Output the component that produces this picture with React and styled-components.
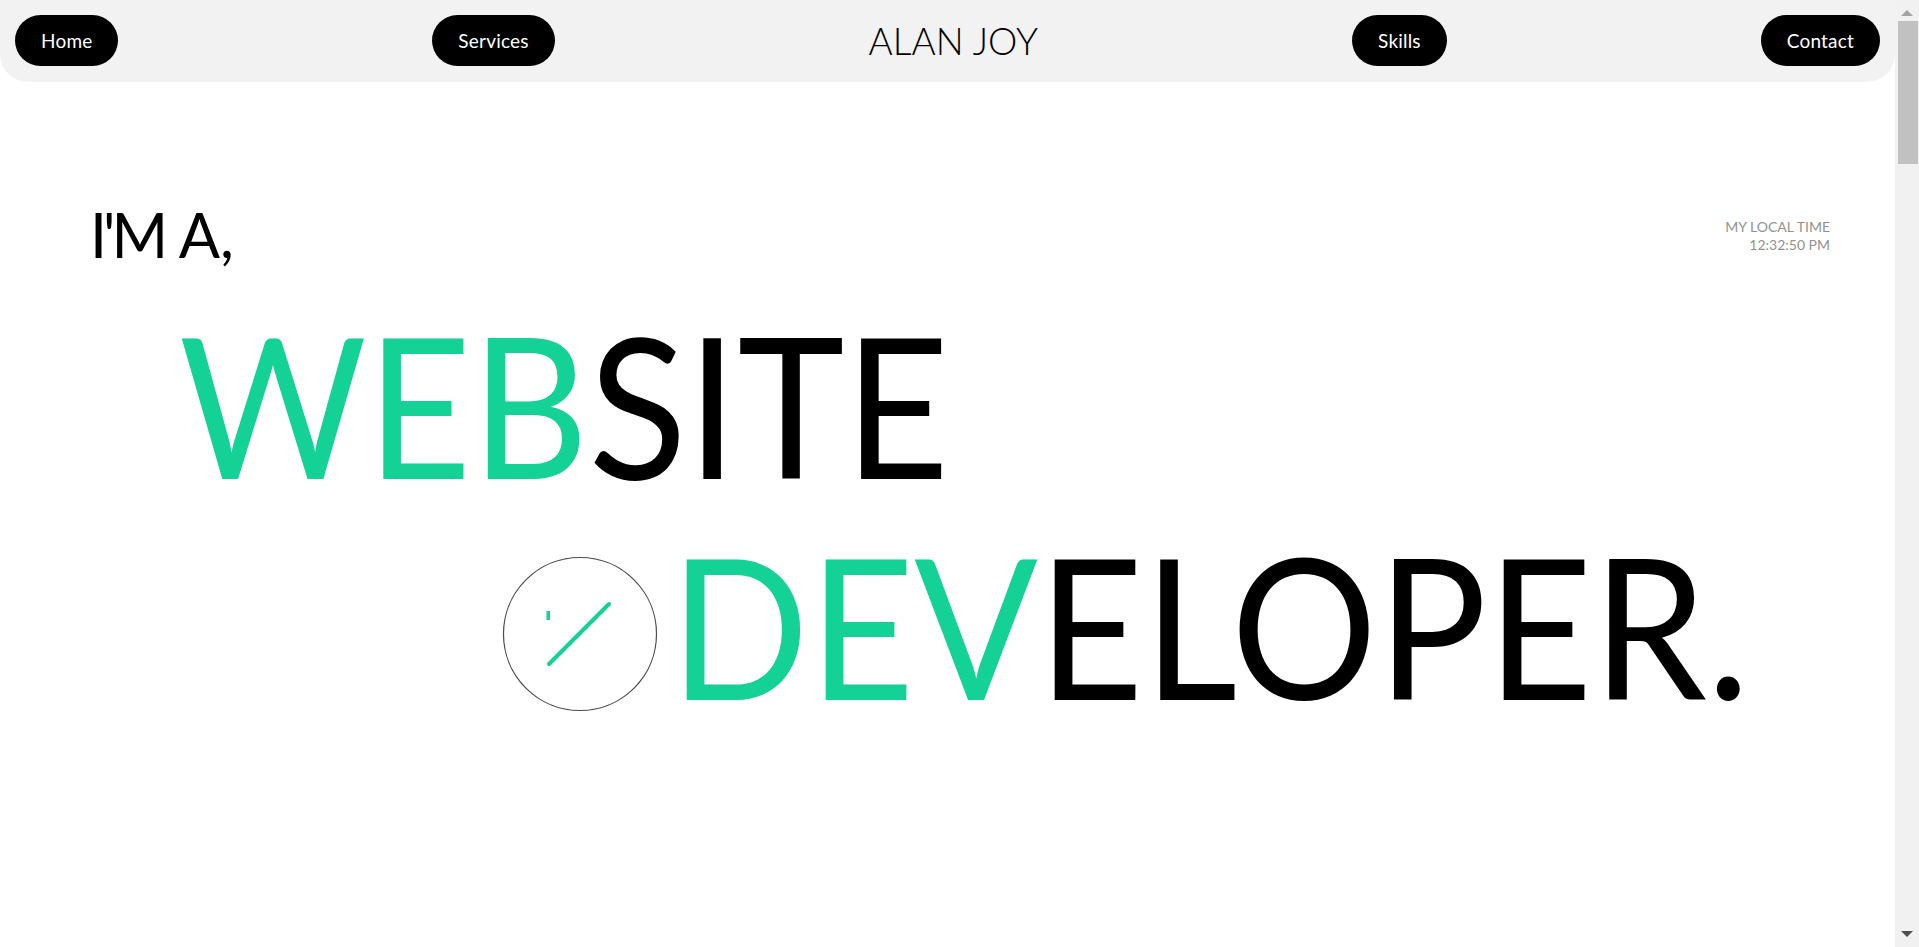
import React from 'react'
import styled, { createGlobalStyle } from 'styled-components';

const green = '#14d195';

const GlobalStyle = createGlobalStyle`
  * {
    box-sizing: border-box;
  }
  body {
    margin: 0;
    background: #fff;
    font-family: "Lato", "Liberation Sans", sans-serif;
    color: #000;
  }
`;

const Clock = () => {
  return (
    <ClockFace viewBox="0 0 156 156" width="156" height="156">
      <circle cx="78" cy="78" r="76.5" fill="none" stroke="#4a4a4a" strokeWidth="1.2" />
      <line x1="47" y1="108" x2="107" y2="48" stroke={green} strokeWidth="4" strokeLinecap="round" />
      <rect x="44.5" y="55" width="3.5" height="9" fill={green} />
    </ClockFace>
  )
}

const App = () => {
  const links = ['Home', 'Services', 'ALAN JOY', 'Skills', 'Contact'];
  return (
    <>
      <GlobalStyle />
      <Page>
        <Nav>
          {links.map((item, index) => {
            return index === 2
              ? <Brand key={index}>{item}</Brand>
              : <NavButton key={index} href={'#' + item.toLowerCase()}>{item}</NavButton>
          })}
        </Nav>
        <Hero id="home">
          <TopRow>
            <Intro>I'M A<Comma>,</Comma></Intro>
            <LocalTime>
              <span>MY LOCAL TIME</span>
              <span>12:32:50 PM</span>
            </LocalTime>
          </TopRow>
          <BigLine indent="89px" top="30px">
            <Word><Accent>WEB</Accent>SITE</Word>
          </BigLine>
          <BigLine indent="412px" top="4px">
            <Clock />
            <Word gap="12px" stretch="0.927"><Accent>DEV</Accent>ELOPER.</Word>
          </BigLine>
        </Hero>
        <Section id="services" />
        <Section id="skills" />
        <Section id="contact" />
      </Page>
      <ScrollTrack>
        <Arrow up />
        <Thumb />
        <Spacer />
        <Arrow />
      </ScrollTrack>
    </>
  )
}

const Page = styled.div`
  margin-right: 24px;
`;

const Nav = styled.nav`
  display: flex;
  justify-content: space-between;
  align-items: center;
  padding: 15px 15px 16px;
  background-color: #f2f2f2;
  border-radius: 0 0 28px 28px;
`;

const NavButton = styled.a`
  display: flex;
  align-items: center;
  height: 51px;
  padding: 0 26px;
  border-radius: 26px;
  background-color: #000;
  color: #fff;
  font-size: 19px;
  letter-spacing: 0.2px;
  text-decoration: none;
`;

const Brand = styled.div`
  font-size: 37px;
  font-weight: 300;
`;

const Hero = styled.section`
  padding: 122px 65px 0 90px;
  height: 1150px;
`;

const TopRow = styled.div`
  display: flex;
  justify-content: space-between;
  align-items: flex-start;
`;

const Intro = styled.h2`
  margin: 0;
  font-size: 61px;
  font-weight: 400;
  line-height: 1;
  letter-spacing: -4px;
  word-spacing: 5px;
`;

const Comma = styled.span`
  margin-left: 4px;
`;

const LocalTime = styled.div`
  display: flex;
  flex-direction: column;
  align-items: flex-end;
  margin-top: 14px;
  font-size: 14px;
  line-height: 18px;
  color: #929292;
`;

const BigLine = styled.h1`
  display: flex;
  align-items: center;
  margin: ${({ top }) => top} 0 0;
  padding-left: ${({ indent }) => indent};
  font-size: 197px;
  font-weight: 400;
  line-height: 1.1;
`;

const Word = styled.span`
  display: inline-block;
  margin-left: ${({ gap }) => gap || 0};
  transform: scaleX(${({ stretch }) => stretch || 0.92});
  transform-origin: left center;
  white-space: nowrap;
`;

const Accent = styled.span`
  color: ${green};
`;

const ClockFace = styled.svg`
  flex-shrink: 0;
  margin-top: 19px;
`;

const Section = styled.section`
  height: 1600px;
`;

const ScrollTrack = styled.aside`
  position: fixed;
  top: 0;
  right: 0;
  bottom: 0;
  width: 24px;
  display: flex;
  flex-direction: column;
  align-items: center;
  background-color: #f1f1f1;
`;

const Arrow = styled.div`
  flex-shrink: 0;
  width: 0;
  height: 0;
  margin: ${({ up }) => (up ? '10px 0 5px' : '5px 0 10px')};
  border-left: 6px solid transparent;
  border-right: 6px solid transparent;
  ${({ up }) => (up ? 'border-bottom: 6px solid #a3a3a3;' : 'border-top: 6px solid #505050;')}
`;

const Thumb = styled.div`
  width: 20px;
  height: 143px;
  margin-left: 2px;
  background-color: #c1c1c1;
`;

const Spacer = styled.div`
  flex: 1;
`;

export default App
